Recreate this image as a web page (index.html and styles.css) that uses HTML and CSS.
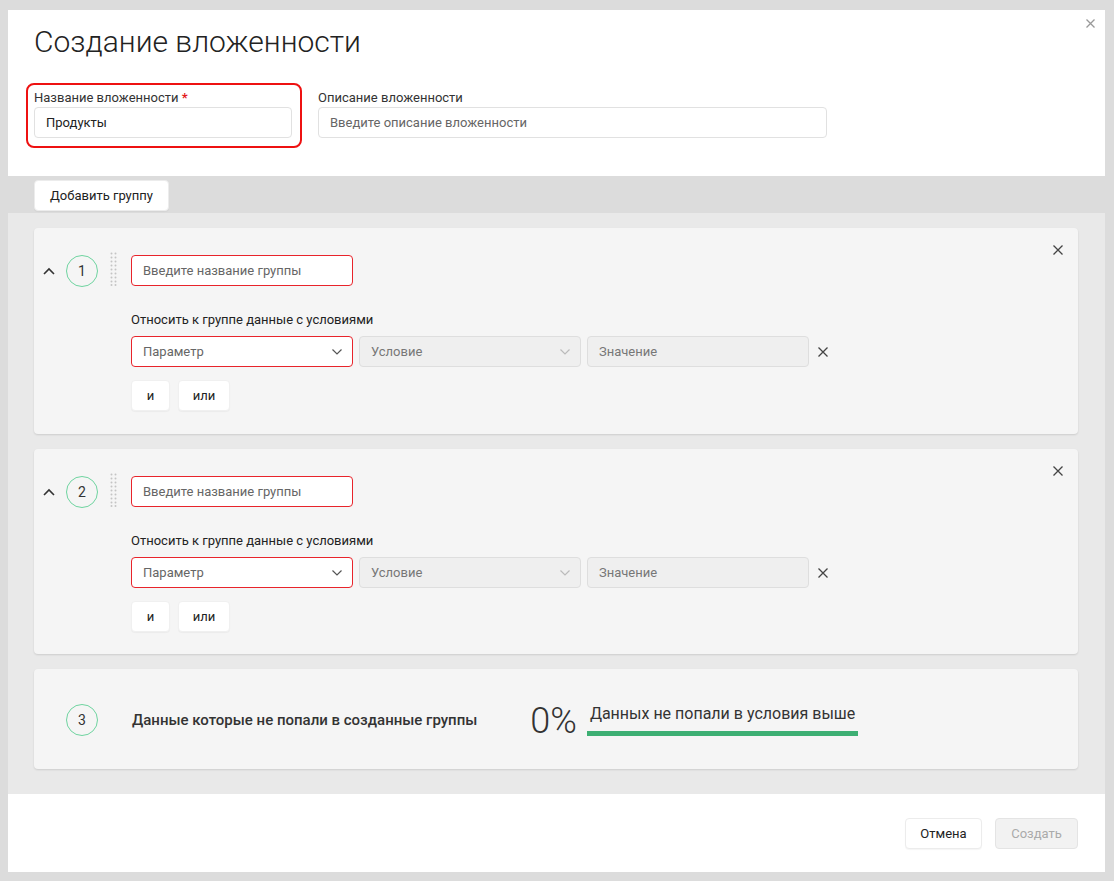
FILE: index.html
```html
<!DOCTYPE html>
<html lang="ru">
<head>
<meta charset="utf-8">
<title>Создание вложенности</title>
<link rel="stylesheet" href="styles.css">
</head>
<body>
<div class="modal">
  <button class="modal-close" aria-label="Закрыть">
    <svg width="9" height="9" viewBox="0 0 9 9"><path d="M0.5 0.5L8.5 8.5M8.5 0.5L0.5 8.5" stroke="#999" stroke-width="1.3" fill="none"/></svg>
  </button>

  <div class="header">
    <h1 class="title">Создание вложенности</h1>
    <div class="form-row">
      <div class="field field--required">
        <div class="label">Название вложенности <span class="req">*</span></div>
        <div class="input input--value">Продукты</div>
      </div>
      <div class="field field--desc">
        <div class="label">Описание вложенности</div>
        <div class="input input--placeholder">Введите описание вложенности</div>
      </div>
    </div>
  </div>

  <div class="toolbar">
    <button class="btn">Добавить группу</button>
  </div>

  <div class="groups">
    <div class="card">
      <button class="card-close" aria-label="Удалить">
        <svg width="10" height="10" viewBox="0 0 10 10"><path d="M0.5 0.5L9.5 9.5M9.5 0.5L0.5 9.5" stroke="#444" stroke-width="1.3" fill="none"/></svg>
      </button>
      <div class="card-side">
        <svg class="chevron" width="12" height="8" viewBox="0 0 12 8"><path d="M1 7L6 2L11 7" stroke="#333" stroke-width="1.6" fill="none"/></svg>
        <div class="num">1</div>
        <svg class="dots" width="7" height="34" viewBox="0 0 7 34"><g fill="#c4c4c4"><circle cx="1.5" cy="1.5" r="1"/><circle cx="5.5" cy="1.5" r="1"/><circle cx="1.5" cy="5.5" r="1"/><circle cx="5.5" cy="5.5" r="1"/><circle cx="1.5" cy="9.5" r="1"/><circle cx="5.5" cy="9.5" r="1"/><circle cx="1.5" cy="13.5" r="1"/><circle cx="5.5" cy="13.5" r="1"/><circle cx="1.5" cy="17.5" r="1"/><circle cx="5.5" cy="17.5" r="1"/><circle cx="1.5" cy="21.5" r="1"/><circle cx="5.5" cy="21.5" r="1"/><circle cx="1.5" cy="25.5" r="1"/><circle cx="5.5" cy="25.5" r="1"/><circle cx="1.5" cy="29.5" r="1"/><circle cx="5.5" cy="29.5" r="1"/><circle cx="1.5" cy="33" r="1"/><circle cx="5.5" cy="33" r="1"/></g></svg>
      </div>
      <div class="card-body">
        <div class="input input--error input--group input--placeholder">Введите название группы</div>
        <div class="cond-label">Относить к группе данные с условиями</div>
        <div class="cond-row">
          <div class="input input--error input--select input--placeholder">Параметр
            <svg class="caret" width="10" height="6" viewBox="0 0 10 6"><path d="M0.5 0.5L5 5L9.5 0.5" stroke="#555" stroke-width="1.2" fill="none"/></svg>
          </div>
          <div class="input input--disabled input--select">Условие
            <svg class="caret" width="10" height="6" viewBox="0 0 10 6"><path d="M0.5 0.5L5 5L9.5 0.5" stroke="#bbb" stroke-width="1.2" fill="none"/></svg>
          </div>
          <div class="input input--disabled input--select">Значение</div>
          <svg class="row-close" width="10" height="10" viewBox="0 0 10 10"><path d="M0.5 0.5L9.5 9.5M9.5 0.5L0.5 9.5" stroke="#444" stroke-width="1.3" fill="none"/></svg>
        </div>
        <div class="logic">
          <button class="btn btn--small btn--and">и</button>
          <button class="btn btn--small btn--or">или</button>
        </div>
      </div>
    </div>

    <div class="card">
      <button class="card-close" aria-label="Удалить">
        <svg width="10" height="10" viewBox="0 0 10 10"><path d="M0.5 0.5L9.5 9.5M9.5 0.5L0.5 9.5" stroke="#444" stroke-width="1.3" fill="none"/></svg>
      </button>
      <div class="card-side">
        <svg class="chevron" width="12" height="8" viewBox="0 0 12 8"><path d="M1 7L6 2L11 7" stroke="#333" stroke-width="1.6" fill="none"/></svg>
        <div class="num">2</div>
        <svg class="dots" width="7" height="34" viewBox="0 0 7 34"><g fill="#c4c4c4"><circle cx="1.5" cy="1.5" r="1"/><circle cx="5.5" cy="1.5" r="1"/><circle cx="1.5" cy="5.5" r="1"/><circle cx="5.5" cy="5.5" r="1"/><circle cx="1.5" cy="9.5" r="1"/><circle cx="5.5" cy="9.5" r="1"/><circle cx="1.5" cy="13.5" r="1"/><circle cx="5.5" cy="13.5" r="1"/><circle cx="1.5" cy="17.5" r="1"/><circle cx="5.5" cy="17.5" r="1"/><circle cx="1.5" cy="21.5" r="1"/><circle cx="5.5" cy="21.5" r="1"/><circle cx="1.5" cy="25.5" r="1"/><circle cx="5.5" cy="25.5" r="1"/><circle cx="1.5" cy="29.5" r="1"/><circle cx="5.5" cy="29.5" r="1"/><circle cx="1.5" cy="33" r="1"/><circle cx="5.5" cy="33" r="1"/></g></svg>
      </div>
      <div class="card-body">
        <div class="input input--error input--group input--placeholder">Введите название группы</div>
        <div class="cond-label">Относить к группе данные с условиями</div>
        <div class="cond-row">
          <div class="input input--error input--select input--placeholder">Параметр
            <svg class="caret" width="10" height="6" viewBox="0 0 10 6"><path d="M0.5 0.5L5 5L9.5 0.5" stroke="#555" stroke-width="1.2" fill="none"/></svg>
          </div>
          <div class="input input--disabled input--select">Условие
            <svg class="caret" width="10" height="6" viewBox="0 0 10 6"><path d="M0.5 0.5L5 5L9.5 0.5" stroke="#bbb" stroke-width="1.2" fill="none"/></svg>
          </div>
          <div class="input input--disabled input--select">Значение</div>
          <svg class="row-close" width="10" height="10" viewBox="0 0 10 10"><path d="M0.5 0.5L9.5 9.5M9.5 0.5L0.5 9.5" stroke="#444" stroke-width="1.3" fill="none"/></svg>
        </div>
        <div class="logic">
          <button class="btn btn--small btn--and">и</button>
          <button class="btn btn--small btn--or">или</button>
        </div>
      </div>
    </div>

    <div class="card card--summary">
      <div class="num">3</div>
      <div class="summary-title">Данные которые не попали в созданные группы</div>
      <div class="percent">0%</div>
      <div class="percent-info">
        <div class="percent-text">Данных не попали в условия выше</div>
        <div class="percent-bar"></div>
      </div>
    </div>
  </div>

  <div class="footer">
    <button class="btn btn--cancel">Отмена</button>
    <button class="btn btn--disabled">Создать</button>
  </div>
</div>
</body>
</html>
```
FILE: styles.css
```css
* { box-sizing: border-box; }

html, body {
  margin: 0;
  padding: 0;
}

body {
  background: #dcdcdc;
  font-family: Roboto, "Noto Sans", "DejaVu Sans", sans-serif;
  color: #333;
  padding: 10px 9px 9px 8px;
}

.modal {
  position: relative;
  width: 1097px;
  background: #fff;
}

button {
  font-family: inherit;
  cursor: pointer;
}

.modal-close {
  position: absolute;
  top: 9px;
  right: 10px;
  width: 9px;
  height: 9px;
  padding: 0;
  border: 0;
  background: none;
  display: flex;
}

/* header */
.header {
  padding: 13px 18px 28px;
}

.title {
  margin: 0 0 22px 8px;
  font-size: 30px;
  line-height: 38px;
  font-weight: 300;
  color: #222;
}

.form-row {
  display: flex;
  gap: 16px;
  align-items: flex-start;
}

.field--required {
  width: 276px;
  border: 2px solid #ee1111;
  border-radius: 8px;
  padding: 5px 8px 8px 6px;
}

.field--desc {
  padding-top: 7px;
  width: 509px;
}

.label {
  font-size: 13px;
  line-height: 16px;
  color: #333;
  margin-bottom: 1px;
}

.req {
  color: #e31b1b;
  font-weight: 700;
}

.input {
  height: 31px;
  border: 1px solid #e1e1e1;
  border-radius: 4px;
  background: #fff;
  font-size: 13px;
  line-height: 29px;
  padding: 0 11px;
  color: #222;
  white-space: nowrap;
}

.input--value { color: #222; }

.input--placeholder { color: #666; }

.input--error {
  border-color: #e8242b;
}

.input--group {
  width: 222px;
}

.input--select {
  width: 222px;
  display: flex;
  align-items: center;
  justify-content: space-between;
}

.input--disabled {
  background: #efefef;
  border-color: #dedede;
  color: #777;
}

.caret { flex: none; margin-right: -1px; }

/* toolbar */
.toolbar {
  background: #dcdcdc;
  padding: 4px 26px 2px;
}

.btn {
  height: 31px;
  border: 1px solid #ececec;
  border-radius: 4px;
  background: #fff;
  font-size: 13px;
  color: #222;
  padding: 0 15px;
  box-shadow: 0 1px 1px rgba(0, 0, 0, 0.04);
}

/* groups */
.groups {
  background: #e9e9e9;
  padding: 15px 27px 25px 26px;
  display: flex;
  flex-direction: column;
  gap: 15px;
}

.card {
  position: relative;
  display: flex;
  background: #f5f5f5;
  border-radius: 4px;
  box-shadow: 0 1px 2px rgba(0, 0, 0, 0.12);
  padding: 27px 0 23px;
}

.card + .card {
  padding-bottom: 22px;
}

.card-close {
  position: absolute;
  top: 17px;
  right: 15px;
  width: 10px;
  height: 10px;
  padding: 0;
  border: 0;
  background: none;
  display: flex;
}

.card-side {
  width: 97px;
  height: 31px;
  padding-left: 9px;
  display: flex;
  align-items: center;
  flex: none;
}

.chevron { flex: none; }

.num {
  width: 32px;
  height: 32px;
  border: 1px solid #6fd4a0;
  border-radius: 50%;
  display: flex;
  align-items: center;
  justify-content: center;
  font-size: 14px;
  color: #333;
  flex: none;
}

.card-side .num {
  margin-left: 11px;
  margin-top: 1px;
}

.dots {
  margin-left: 12px;
  margin-top: -3px;
  flex: none;
}

.card-body {
  display: flex;
  flex-direction: column;
  align-items: flex-start;
}

.cond-label {
  margin-top: 26px;
  font-size: 13px;
  line-height: 16px;
  color: #222;
}

.cond-row {
  margin-top: 8px;
  display: flex;
  align-items: center;
  gap: 6px;
}

.row-close {
  margin-left: 3px;
  flex: none;
}

.logic {
  margin-top: 13px;
  display: flex;
  gap: 8px;
}

.btn--small {
  padding: 0;
  border-color: #f0f0f0;
}

.btn--and { width: 39px; }
.btn--or { width: 52px; }

/* summary card */
.card.card--summary {
  padding: 34px 0 32px 32px;
  align-items: center;
}

.summary-title {
  margin-left: 34px;
  font-size: 15px;
  font-weight: 500;
  color: #333;
}

.percent {
  margin-left: 53px;
  font-size: 36px;
  line-height: 32px;
  font-weight: 300;
  color: #333;
  padding-top: 2px;
}

.percent-info {
  margin-left: 10px;
  display: flex;
  flex-direction: column;
}

.percent-text {
  padding-left: 3px;
  font-size: 16px;
  line-height: 20px;
  color: #333;
}

.percent-bar {
  margin-top: 7px;
  width: 271px;
  height: 5px;
  background: #3daf73;
}

/* footer */
.footer {
  padding: 24px 27px 23px;
  display: flex;
  justify-content: flex-end;
  gap: 13px;
}

.btn--cancel {
  width: 77px;
  padding: 0;
}

.btn--disabled {
  width: 83px;
  padding: 0;
  background: #f2f2f2;
  border-color: #e4e4e4;
  color: #aaa;
  box-shadow: none;
}
```
